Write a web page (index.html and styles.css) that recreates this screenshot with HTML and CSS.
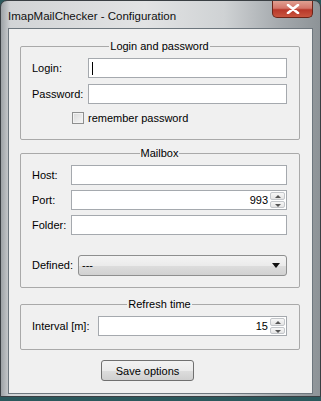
FILE: index.html
```
<!DOCTYPE html>
<html>
  <head>
    <title>ImapMailChecker - Configuration</title>
    <link rel="stylesheet" href="styles.css">
  </head>
  <body>
    <div id="window">
      <div id="titlebar">
        <span id="title">ImapMailChecker - Configuration</span>
        <div id="close">
          <svg width="14" height="10" viewBox="0 0 14 10">
            <path d="M2 1 L12 9 M12 1 L2 9" stroke="#fff" stroke-width="2.6" stroke-linecap="round" />
          </svg>
        </div>
      </div>

      <div id="client">
        <fieldset class="group login-group">
          <legend>Login and password</legend>
          <div class="row login">
            <label>Login:</label>
            <div class="edit"><span class="caret"></span></div>
          </div>
          <div class="row login">
            <label>Password:</label>
            <div class="edit"></div>
          </div>
          <div class="check-row">
            <span class="check"></span>
            <span>remember password</span>
          </div>
        </fieldset>

        <fieldset class="group mailbox-group">
          <legend>Mailbox</legend>
          <div class="row mailbox">
            <label>Host:</label>
            <div class="edit"></div>
          </div>
          <div class="row mailbox">
            <label>Port:</label>
            <div class="edit number">
              <span class="value">993</span>
              <div class="spin">
                <span class="up"></span>
                <span class="down"></span>
              </div>
            </div>
          </div>
          <div class="row mailbox">
            <label>Folder:</label>
            <div class="edit"></div>
          </div>
          <div class="row defined">
            <label>Defined:</label>
            <div class="combo">
              <span>---</span>
              <span class="arrow"></span>
            </div>
          </div>
        </fieldset>

        <fieldset class="group refresh-group">
          <legend>Refresh time</legend>
          <div class="row interval">
            <label>Interval [m]:</label>
            <div class="edit number">
              <span class="value">15</span>
              <div class="spin">
                <span class="up"></span>
                <span class="down"></span>
              </div>
            </div>
          </div>
        </fieldset>

        <button id="save">Save options</button>
      </div>
    </div>
  </body>
</html>
```

FILE: styles.css
```
body {
  margin: 0;
  background: #2b585c;
  font-family: "Liberation Sans", Arial, sans-serif;
  font-size: 11px;
  color: #000;
}

#window {
  height: 397px;
  box-sizing: border-box;
  border: 1px solid #3a3f43;
  border-radius: 7px 7px 0 0;
  background: linear-gradient(to right, #9da2a6 0%, #d2d4d6 3%, #e2e3e4 45%, #cfd2d4 70%, #a3a8ac 88%, #8d9397 100%);
  padding: 0 7px 0 7px;
}

#titlebar {
  height: 27px;
  display: flex;
  justify-content: space-between;
  align-items: flex-start;
}

#title {
  margin-top: 8px;
  line-height: 14px;
  font-size: 11.5px;
  color: #111;
}

#close {
  width: 41px;
  height: 17px;
  box-sizing: border-box;
  border: 1px solid #6b2418;
  border-top: none;
  border-radius: 0 0 5px 5px;
  background: linear-gradient(#e0a092 0%, #d4766a 45%, #b8382a 55%, #c8553f 100%);
  display: flex;
  align-items: center;
  justify-content: center;
}

#client {
  height: 366px;
  box-sizing: border-box;
  border: 1px solid #6d767d;
  background: #f0f0f0;
  padding: 10px 12px 0 11px;
}

.group {
  margin: 0 0 9px 0;
  padding: 5px 12px 11px 11px;
  border: 1px solid #a9a9a9;
  border-radius: 2px;
}

.login-group {
  padding-bottom: 13px;
  margin-bottom: 6px;
}

.mailbox-group {
  padding-bottom: 12px;
}

.refresh-group {
  padding-bottom: 13px;
}

.group legend {
  margin: 0 auto;
  padding: 0 1px;
  line-height: 14px;
}

.row {
  display: flex;
  align-items: center;
  height: 20px;
  margin-bottom: 5px;
}

.row:last-child {
  margin-bottom: 0;
}

.row label {
  flex: none;
}

.login label { width: 56px; }
.login { margin-bottom: 6px; }
.mailbox label { width: 39px; }
.defined label { width: 46px; }
.defined { margin-top: 20px; }
.interval label { width: 66px; }

.edit {
  flex: 1;
  height: 20px;
  box-sizing: border-box;
  border: 1px solid #a5a9ae;
  background: #fff;
  display: flex;
  align-items: center;
}

.caret {
  width: 1px;
  height: 13px;
  background: #000;
  margin-left: 3px;
}

.number {
  justify-content: flex-end;
  padding-right: 1px;
}

.number .value {
  margin-right: 2px;
}

.spin {
  width: 15px;
  height: 16px;
  display: flex;
  flex-direction: column;
  gap: 1px;
}

.spin span {
  flex: 1;
  border: 1px solid #c3c6ca;
  border-radius: 2px;
  background: linear-gradient(#f7f7f7, #e4e4e4);
  position: relative;
}

.spin span::after {
  content: "";
  position: absolute;
  left: 4px;
  top: 2px;
  border-left: 3px solid transparent;
  border-right: 3px solid transparent;
}

.spin .up::after {
  border-bottom: 3px solid #555;
}

.spin .down::after {
  border-top: 3px solid #555;
}

.check-row {
  display: flex;
  align-items: center;
  gap: 4px;
  height: 16px;
  margin: 6px 0 0 40px;
}

.check {
  width: 12px;
  height: 12px;
  box-sizing: border-box;
  border: 1px solid #8e8f8f;
  background: linear-gradient(135deg, #d9d9d9, #f6f6f6);
  box-shadow: inset 0 0 0 1px #f2f2f2;
}

.combo {
  flex: 1;
  height: 21px;
  box-sizing: border-box;
  border: 1px solid #8e8f8f;
  border-radius: 3px;
  background: linear-gradient(#f4f4f4 0%, #ebebeb 50%, #dddddd 51%, #d1d1d1 100%);
  display: flex;
  align-items: center;
  justify-content: space-between;
  padding: 0 6px 0 3px;
}

.arrow {
  border-left: 4px solid transparent;
  border-right: 4px solid transparent;
  border-top: 5px solid #111;
}

#save {
  margin: 1px 0 0 81px;
  width: 93px;
  height: 21px;
  border: 1px solid #707070;
  border-radius: 3px;
  background: linear-gradient(#f2f2f2 0%, #ebebeb 50%, #dddddd 51%, #cfcfcf 100%);
  font-family: "Liberation Sans", Arial, sans-serif;
  font-size: 11px;
  color: #000;
  padding: 0;
}
```
